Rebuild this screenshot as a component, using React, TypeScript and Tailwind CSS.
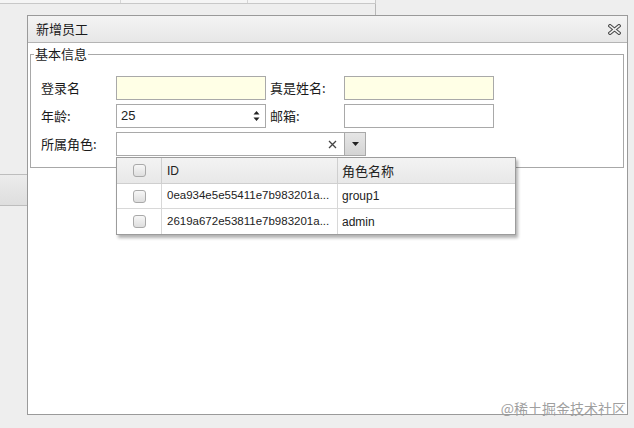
import React from "react";

const cjk = { fontFamily: '"Noto Sans CJK SC", "Liberation Sans", sans-serif' };
const latin = { fontFamily: '"Liberation Sans", "Noto Sans CJK SC", sans-serif' };

const roles = [
  { id: "0ea934e5e55411e7b983201a...", name: "group1" },
  { id: "2619a672e53811e7b983201a...", name: "admin" },
];

function Check() {
  return (
    <span className="block h-[13px] w-[13px] rounded-[3px] border border-[#a9a9a9] bg-gradient-to-b from-[#f7f7f7] to-[#dedede]" />
  );
}

function CloseIcon() {
  return (
    <svg width="13" height="11" viewBox="0 0 13 11">
      <path d="M2 1.8 L11 9.2 M11 1.8 L2 9.2" stroke="#4a4a4a" strokeWidth="3.6" strokeLinecap="square" />
      <path d="M2 1.8 L11 9.2 M11 1.8 L2 9.2" stroke="#f2f2f2" strokeWidth="1.5" strokeLinecap="square" />
    </svg>
  );
}

function Label({ children, w }: { children: React.ReactNode; w: string }) {
  return <div className={`${w} shrink-0 text-[13px] leading-[24px] text-[#1a1a1a]`}>{children}</div>;
}

export default function App() {
  return (
    <div className="relative h-[428px] w-[634px] overflow-hidden bg-[#eeeeee]" style={cjk}>
      {/* page behind the window */}
      <div className="flex h-[4px] w-[376px] border-b border-r border-[#c8c8c8] bg-[#f5f5f5]">
        <div className="w-[121px] border-r border-[#d6d6d6]" />
        <div className="w-[127px] border-r border-[#d6d6d6]" />
        <div className="flex-1" />
      </div>
      <div className="h-[15px] w-[376px] border-r border-[#b8b8b8]" />
      <div className="mt-[155px] h-[32px] w-[28px] border-y border-[#bdbdbd] bg-gradient-to-b from-[#ececec] to-[#dedede]" />

      {/* window */}
      <div className="absolute left-[27px] top-[15px] flex h-[400px] w-[601px] flex-col border border-[#9a9a9a] bg-white">
        <div className="flex h-[27px] shrink-0 items-center justify-between border-b border-[#b4b4b4] bg-gradient-to-b from-[#f4f4f4] to-[#e7e7e7] pl-[8px] pr-[6px]">
          <span className="text-[13px] text-[#1a1a1a]">新增员工</span>
          <CloseIcon />
        </div>
        <div className="flex-1 px-[2px] pt-[3px]">
          <fieldset className="w-[594px] border border-[#a8a8a8]">
            <legend className="ml-[3px] px-[1px] text-[13px] leading-[16px] text-[#1a1a1a]">基本信息</legend>
            <div className="flex flex-col gap-[4px] pb-[11px] pl-[10px] pt-[14px]">
              <div className="flex items-center">
                <Label w="w-[75px]">登录名</Label>
                <div className="h-[24px] w-[150px] border border-[#a9a9a9] bg-[#ffffe6]" />
                <Label w="ml-[4px] w-[74px]">真是姓名:</Label>
                <div className="h-[24px] w-[150px] border border-[#a9a9a9] bg-[#ffffe6]" />
              </div>
              <div className="flex items-center">
                <Label w="w-[75px]">年龄:</Label>
                <div className="flex h-[24px] w-[150px] items-center justify-between border border-[#a9a9a9] bg-white pl-[4px] pr-[5px]">
                  <span className="text-[13px] text-[#222]" style={latin}>25</span>
                  <svg width="7" height="12" viewBox="0 0 7 12">
                    <path d="M0.5 4.5 L3.5 1 L6.5 4.5 Z M0.5 7.5 L3.5 11 L6.5 7.5 Z" fill="#222" />
                  </svg>
                </div>
                <Label w="ml-[4px] w-[74px]">邮箱:</Label>
                <div className="h-[24px] w-[150px] border border-[#a9a9a9] bg-white" />
              </div>
              <div className="flex items-center">
                <Label w="w-[75px]">所属角色:</Label>
                <div className="relative">
                  <div className="flex h-[24px] w-[250px] items-center justify-end border border-[#a9a9a9] bg-white">
                    <svg width="9" height="9" viewBox="0 0 9 9" className="mr-[7px]">
                      <path d="M1 1 L8 8 M8 1 L1 8" stroke="#444" strokeWidth="1.3" />
                    </svg>
                    <div className="flex h-[22px] w-[21px] items-center justify-center border-l border-[#a9a9a9] bg-gradient-to-b from-[#e6e6e6] to-[#d4d4d4]">
                      <svg width="7" height="4" viewBox="0 0 7 4">
                        <path d="M0 0 L7 0 L3.5 4 Z" fill="#222" />
                      </svg>
                    </div>
                  </div>

                  {/* dropdown grid */}
                  <div className="absolute left-0 top-full z-10 mt-[1px] w-[400px] border border-[#9c9c9c] bg-white shadow-[2px_3px_3px_rgba(0,0,0,0.3)]">
                    <div className="flex h-[26px] border-b border-[#cfcfcf] bg-gradient-to-b from-[#f3f3f3] to-[#e8e8e8] text-[12px] text-[#222]">
                      <div className="flex w-[45px] items-center justify-center border-r border-[#cfcfcf]">
                        <Check />
                      </div>
                      <div className="flex w-[176px] items-center border-r border-[#cfcfcf] pl-[5px]" style={latin}>ID</div>
                      <div className="flex flex-1 items-center pl-[4px] text-[13px]">角色名称</div>
                    </div>
                    {roles.map((r, i) => (
                      <div key={r.id} className={`flex h-[25px] text-[12px] text-[#222] ${i === 0 ? "border-b border-[#d8d8d8]" : ""}`} style={latin}>
                        <div className="flex w-[45px] items-center justify-center border-r border-[#d8d8d8]">
                          <Check />
                        </div>
                        <div className="flex w-[176px] items-center overflow-hidden whitespace-nowrap border-r border-[#d8d8d8] pl-[5px] text-[11.5px]">{r.id}</div>
                        <div className="flex flex-1 items-center pl-[4px]">{r.name}</div>
                      </div>
                    ))}
                  </div>
                </div>
              </div>
            </div>
          </fieldset>
        </div>
      </div>

      <div className="absolute bottom-[12px] right-[8px] text-[14px] leading-[16px] text-[#9f9f9f]">@稀土掘金技术社区</div>
    </div>
  );
}
